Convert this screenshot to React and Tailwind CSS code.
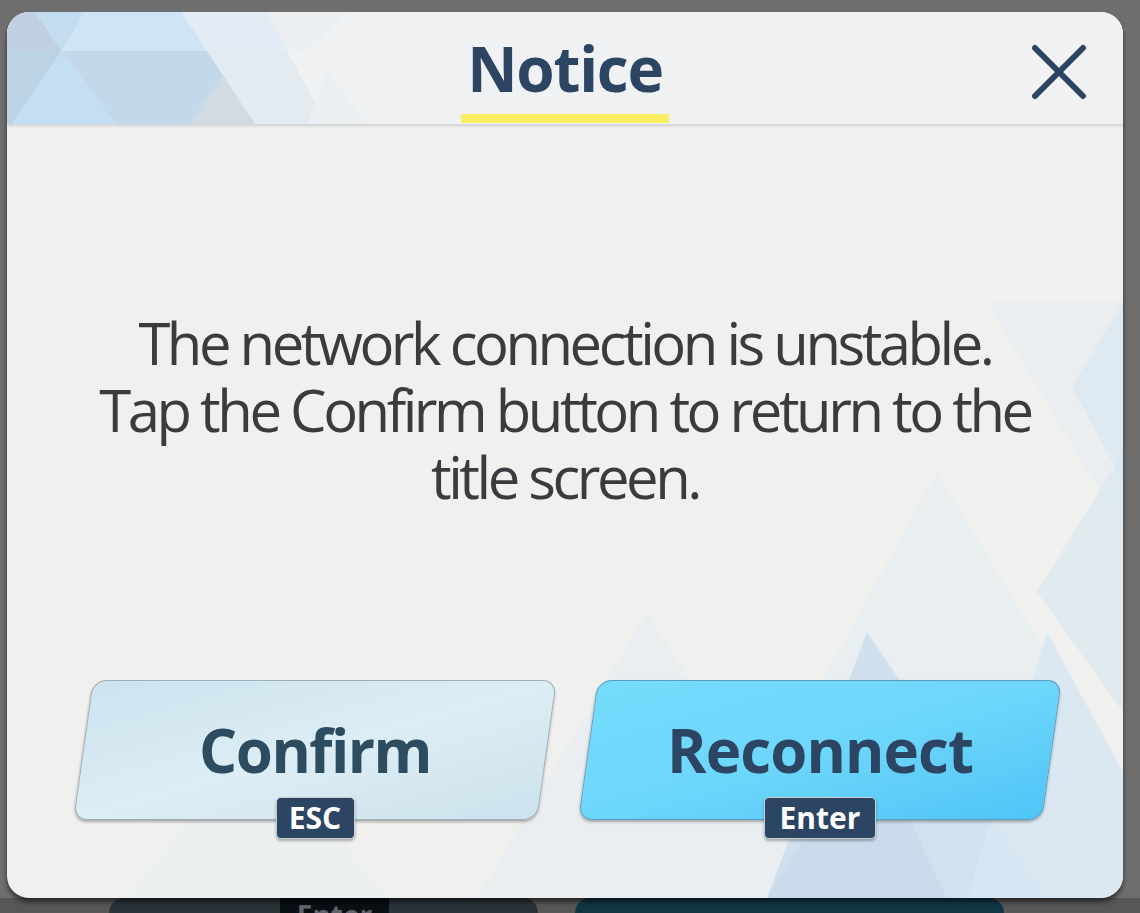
const FONT = { fontFamily: '"Open Sans", "Noto Sans", sans-serif' };

function HeaderPattern() {
  return (
    <svg
      className="absolute inset-0 pointer-events-none"
      width="1116"
      height="886"
      viewBox="0 0 1116 886"
    >
      <rect x="0" y="0" width="1116" height="112" fill="#eff1f3" />
      {/* header triangles, top-left */}
      <polygon points="0,0 28,0 55,39 0,39" fill="#bfd1e1" />
      <polygon points="0,39 55,39 5,112 0,112" fill="#bcd3e6" />
      <polygon points="55,39 108,112 5,112" fill="#c4dff3" />
      <polygon points="28,0 78,0 55,39" fill="#c3dcf0" />
      <polygon points="78,0 175,0 200,39 55,39" fill="#cfe5f6" />
      <polygon points="55,39 200,39 248,112 108,112" fill="#c3d8ea" />
      <polygon points="175,0 260,0 280,39 200,39" fill="#e3ecf4" />
      <polygon points="200,39 280,39 320,112 248,112" fill="#e4ebf0" />
      <polygon points="215,64 248,112 183,112" fill="#d2dbe2" />
      <polygon points="260,0 340,0 300,39 280,39" fill="#ebeff2" />
      <polygon points="320,60 360,112 300,112" fill="#eceff2" />
      {/* body triangles */}
      <polygon points="980,290 1116,290 1116,520" fill="#e4ecf2" opacity="0.45" />
      <polygon points="1065,375 1116,290 1116,470" fill="#d3e4f1" opacity="0.5" />
      <polygon points="1116,440 1116,700 1030,580" fill="#d6e5f1" opacity="0.55" />
      <polygon points="930,460 1116,770 760,770" fill="#e2ebf2" opacity="0.5" />
      <polygon points="640,600 820,886 470,886" fill="#e6edf2" opacity="0.6" />
      <polygon points="860,620 1040,886 760,886" fill="#cbdeec" opacity="0.85" />
      <polygon points="1040,620 1116,760 1116,886 960,886" fill="#d7e6f2" opacity="0.85" />
      <polygon points="760,886 860,720 940,886" fill="#c4d9e9" opacity="0.55" />
      <polygon points="250,720 380,886 120,886" fill="#eaeff1" opacity="0.7" />
    </svg>
  );
}

function KeyBadge({ label, width }) {
  return (
    <div
      className={`relative h-[42px] ${width} -mt-[23px] flex items-center justify-center rounded-[5px] bg-[#2c4563] border border-[#c9ced3] shadow-[0_2px_3px_rgba(0,0,0,0.3)] text-white text-[30px] font-bold leading-none`}
    >
      {label}
    </div>
  );
}

function ActionButton({ label, badge, badgeWidth, primary }) {
  return (
    <div className="flex flex-col items-center">
      <div
        className={
          primary
            ? "w-[464px] h-[140px] -skew-x-8 rounded-[14px] border border-[#5b9dbd] bg-linear-to-br from-[#74dcfc] via-[#6dd6fb] to-[#4fc5f7] shadow-[0_2px_3px_rgba(0,0,0,0.3)] flex items-center justify-center"
            : "w-[464px] h-[140px] -skew-x-8 rounded-[14px] border border-[#9eafb9] bg-linear-to-br from-[#cde3ef] via-[#dcedf4] to-[#cde2ed] shadow-[0_2px_3px_rgba(0,0,0,0.3)] flex items-center justify-center"
        }
      >
        <span
          className={
            primary
              ? "skew-x-8 text-[60px] font-bold leading-none tracking-[-0.015em] text-[#2c4563]"
              : "skew-x-8 text-[60px] font-bold leading-none tracking-[-0.025em] text-[#2d4c60]"
          }
        >
          {label}
        </span>
      </div>
      <KeyBadge label={badge} width={badgeWidth} />
    </div>
  );
}

function App() {
  return (
    <div
      className="w-[1140px] h-[913px] overflow-hidden bg-[#6f6f6f] flex flex-col pt-[12px]"
      style={FONT}
    >
      <div className="relative z-10 ml-[7px] w-[1116px] h-[886px] rounded-[22px] overflow-hidden bg-[#f0f0ee] shadow-[0_4px_5px_rgba(0,0,0,0.55)] flex flex-col">
        <HeaderPattern />

        <header className="relative h-[114px] border-b-2 border-[#d7d8da] shadow-[0_1px_2px_rgba(0,0,0,0.06)] grid grid-cols-[1fr_auto_1fr]">
          <div />
          <div className="flex flex-col items-center pt-[25px]">
            <h1 className="text-[62px] font-bold leading-none tracking-[-0.02em] text-[#2c4563]">
              Notice
            </h1>
            <div className="mt-[15px] h-[9px] w-[208px] bg-[#fbee62]" />
          </div>
          <div className="justify-self-end pt-[32px] pr-[36px]">
            <svg width="56" height="56" viewBox="0 0 56 56">
              <path
                d="M4 4 L52 52 M52 4 L4 52"
                stroke="#2c4563"
                strokeWidth="6"
                strokeLinecap="round"
                fill="none"
              />
            </svg>
          </div>
        </header>

        <main className="relative flex-1 flex flex-col items-center pt-[183px]">
          <p className="text-center text-[58px] leading-[67px] tracking-[-0.06em] text-[#3a3b3f]">
            The network connection is unstable.
            <br />
            Tap the Confirm button to return to the
            <br />
            title screen.
          </p>

          <div className="mt-[170px] flex gap-[41px] pl-[5px]">
            <ActionButton label="Confirm" badge="ESC" badgeWidth="w-[79px]" />
            <ActionButton
              label="Reconnect"
              badge="Enter"
              badgeWidth="w-[112px]"
              primary
            />
          </div>
        </main>
      </div>

      {/* what peeks out below the dialog */}
      <div className="h-[15px] flex bg-[#575757]">
        <div className="w-[109px]" />
        <div className="w-[429px] bg-[#2a3338] rounded-t-[20px] flex">
          <div className="ml-[171px] w-[109px] bg-[#0a0f14] overflow-hidden flex justify-center">
            <span className="mt-[3px] text-[28px] font-bold leading-none text-[#5f656b]">
              Enter
            </span>
          </div>
        </div>
        <div className="w-[37px]" />
        <div className="w-[429px] bg-[#113745] rounded-t-[20px]" />
      </div>
    </div>
  );
}

export default App;
